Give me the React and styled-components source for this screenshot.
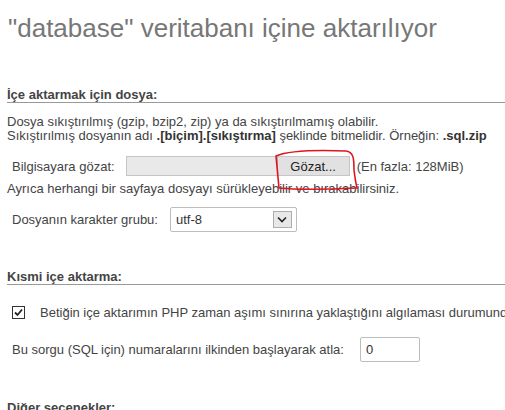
import React from "react";
import styled, { createGlobalStyle } from "styled-components";

const GlobalStyle = createGlobalStyle`
  html, body {
    margin: 0;
    padding: 0;
    background: #ffffff;
    overflow: hidden;
  }
  body {
    font-family: "Liberation Sans", Arial, sans-serif;
    color: #444444;
    font-size: 13px;
  }
`;

const Page = styled.div`
  position: relative;
  width: 505px;
  height: 410px;
  overflow: hidden;
`;

const Title = styled.h2`
  margin: 0;
  padding: 13px 0 0 8px;
  font-size: 26px;
  font-weight: normal;
  line-height: 30px;
  color: #777777;
  white-space: nowrap;
`;

const Heading = styled.h3`
  margin: ${(p) => p.$top}px 0 0 7px;
  font-size: 13px;
  font-weight: bold;
  line-height: 15px;
  color: #444444;
  border-bottom: 1px solid #999999;
  white-space: nowrap;
`;

const Text = styled.div`
  margin: ${(p) => p.$top || 0}px 0 0 7px;
  line-height: 14px;
  white-space: nowrap;
  b {
    color: #333333;
  }
`;

const Row = styled.div`
  display: flex;
  align-items: center;
  margin: ${(p) => p.$top}px 0 0 12px;
  height: ${(p) => p.$h}px;
  white-space: nowrap;
`;

const Label = styled.span`
  margin-right: ${(p) => p.$gap}px;
`;

const FileField = styled.div`
  display: flex;
  width: 224px;
  height: 20px;
  box-sizing: border-box;
  background: #e9e9e9;
  border: 1px solid #c6c6c6;
`;

const FilePath = styled.div`
  flex: 1;
`;

const BrowseButton = styled.div`
  width: 72px;
  box-sizing: border-box;
  border-left: 1px solid #adadad;
  background: #e1e1e1;
  color: #222222;
  display: flex;
  align-items: center;
  justify-content: center;
  font-size: 13px;
`;

const Hint = styled.span`
  margin-left: 7px;
`;

const Select = styled.div`
  display: flex;
  align-items: center;
  justify-content: space-between;
  width: 127px;
  height: 25px;
  box-sizing: border-box;
  border: 1px solid #bdbdbd;
  border-radius: 2px;
  padding: 0 4px 0 5px;
  color: #333333;
`;

const ArrowBox = styled.div`
  width: 19px;
  height: 17px;
  box-sizing: border-box;
  border: 1px solid #adadad;
  background: #e8e8e8;
  display: flex;
  align-items: center;
  justify-content: center;
`;

const Check = styled.div`
  width: 13px;
  height: 13px;
  box-sizing: border-box;
  border: 1px solid #333333;
  background: #ffffff;
  margin-right: 15px;
  display: flex;
  align-items: center;
  justify-content: center;
`;

const NumberInput = styled.div`
  width: 60px;
  height: 25px;
  box-sizing: border-box;
  border: 1px solid #bdbdbd;
  border-radius: 2px;
  padding-left: 5px;
  display: flex;
  align-items: center;
  color: #333333;
`;

const Scribble = styled.svg`
  position: absolute;
  left: 0;
  top: 0;
  pointer-events: none;
`;

export default function App() {
  return (
    <Page>
      <GlobalStyle />
      <Title>"database" veritabanı içine aktarılıyor</Title>

      <Heading $top={44}>İçe aktarmak için dosya:</Heading>
      <Text $top={12}>Dosya sıkıştırılmış (gzip, bzip2, zip) ya da sıkıştırılmamış olabilir.</Text>
      <Text>
        Sıkıştırılmış dosyanın adı <b>.[biçim].[sıkıştırma]</b> şeklinde bitmelidir. Örneğin: <b>.sql.zip</b>
      </Text>
      <Row $top={13} $h={20}>
        <Label $gap={11}>Bilgisayara gözat:</Label>
        <FileField>
          <FilePath />
          <BrowseButton>Gözat...</BrowseButton>
        </FileField>
        <Hint>(En fazla: 128MiB)</Hint>
      </Row>
      <Text $top={6}>Ayrıca herhangi bir sayfaya dosyayı sürükleyebilir ve bırakabilirsiniz.</Text>
      <Row $top={11} $h={25}>
        <Label $gap={12}>Dosyanın karakter grubu:</Label>
        <Select>
          <span>utf-8</span>
          <ArrowBox>
            <svg width="10" height="7" viewBox="0 0 10 7">
              <path d="M1 1.5 L5 5.5 L9 1.5" fill="none" stroke="#222" strokeWidth="1.6" />
            </svg>
          </ArrowBox>
        </Select>
      </Row>

      <Heading $top={37}>Kısmi içe aktarma:</Heading>
      <Row $top={19} $h={16}>
        <Check>
          <svg width="11" height="11" viewBox="0 0 11 11">
            <path d="M2 5.5 L4.5 8 L9 2.5" fill="none" stroke="#222" strokeWidth="1.8" />
          </svg>
        </Check>
        <span>Betiğin içe aktarımın PHP zaman aşımı sınırına yaklaştığını algılaması durumunda içe aktarıma ara verilmesine izin ver.</span>
      </Row>
      <Row $top={17} $h={25}>
        <Label $gap={16}>Bu sorgu (SQL için) numaralarını ilkinden başlayarak atla:</Label>
        <NumberInput>0</NumberInput>
      </Row>

      <Heading $top={38}>Diğer seçenekler:</Heading>

      <Scribble width="505" height="410" viewBox="0 0 505 410">
        <path
          d="M276 156 C 290 150, 320 150, 346 151 C 354 152, 354 160, 354 170 C 355 178, 356 184, 357 188 C 335 189, 300 190, 279 188 C 278 178, 277 166, 276 156"
          fill="none"
          stroke="#e0141e"
          strokeWidth="1.6"
          strokeLinecap="round"
        />
      </Scribble>
    </Page>
  );
}
